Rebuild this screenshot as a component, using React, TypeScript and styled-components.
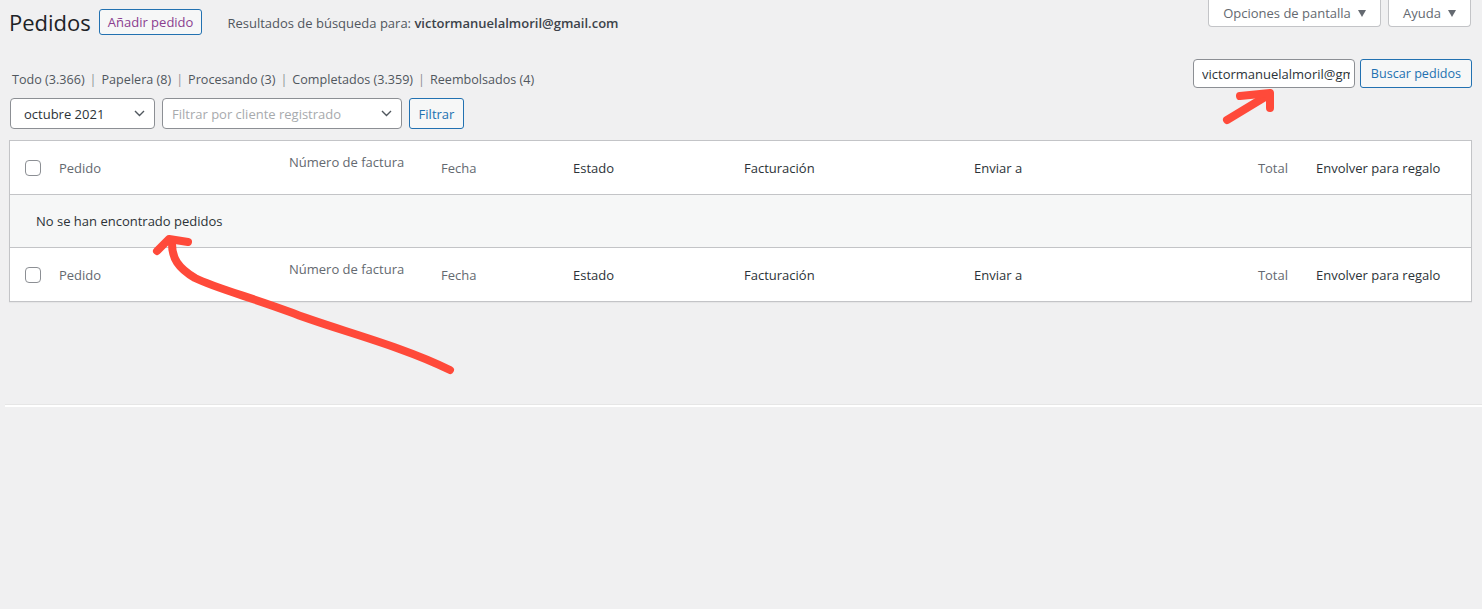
import React from "react"
import styled, { createGlobalStyle } from "styled-components"

const GlobalStyle = createGlobalStyle`
  body {
    margin: 0;
    background: #f0f0f1;
    font-family: "Open Sans", "Noto Sans", sans-serif;
    font-size: 13px;
    color: #3c434a;
  }
`

const Page = styled.div`
  position: relative;
  padding: 0 10px 0 9px;
  min-height: 609px;
  box-sizing: border-box;
`

const TopRow = styled.div`
  display: flex;
  justify-content: space-between;
  align-items: flex-start;
`

const TitleGroup = styled.div`
  display: flex;
  align-items: center;
  padding-top: 9px;
`

const Title = styled.h1`
  margin: 0 8px 0 0;
  font-size: 22px;
  font-weight: 400;
  line-height: 26px;
  color: #1d2327;
`

const OutlineButton = styled.button<{ $visited?: boolean }>`
  height: ${p => (p.$visited ? "26px" : "29px")};
  padding: 0 ${p => (p.$visited ? "8px" : "10px")};
  border: 1px solid #2271b1;
  border-radius: 3px;
  background: #f6f7f7;
  color: ${p => (p.$visited ? "#8a3d8f" : "#2271b1")};
  font-family: inherit;
  font-size: 13px;
  white-space: nowrap;
  cursor: pointer;
  box-sizing: border-box;
`

const SearchInfo = styled.span`
  margin-left: 25px;
  color: #50575e;
  font-size: 13px;
  padding-top: 2px;

  strong {
    color: #3c434a;
    font-weight: 600;
  }
`

const MetaTabs = styled.div`
  display: flex;
  gap: 7px;
  margin-right: 1px;
`

const MetaTab = styled.button<{ $width: number }>`
  display: flex;
  align-items: center;
  justify-content: center;
  gap: 7px;
  width: ${p => p.$width}px;
  height: 27px;
  padding: 0;
  border: 1px solid #c3c4c7;
  border-top: none;
  border-radius: 0 0 4px 4px;
  background: #fff;
  color: #646970;
  font-family: inherit;
  font-size: 13px;
  white-space: nowrap;
  box-sizing: border-box;
  cursor: pointer;
`

const Caret = styled.span`
  width: 0;
  height: 0;
  border-left: 4px solid transparent;
  border-right: 4px solid transparent;
  border-top: 7px solid #646970;
`

const Toolbar = styled.div`
  display: flex;
  justify-content: space-between;
  align-items: flex-start;
  margin-top: 24px;
`

const LeftTools = styled.div`
  display: flex;
  flex-direction: column;
`

const Views = styled.ul`
  display: flex;
  margin: 12px 0 0 3px;
  padding: 0;
  list-style: none;
  line-height: 18px;
  color: #50575e;
  font-size: 12.6px;
`

const ViewItem = styled.li`
  &:not(:last-child)::after {
    content: "|";
    color: #8c8f94;
    margin: 0 5px;
  }
`

const Filters = styled.div`
  display: flex;
  gap: 7px;
  margin: 9px 0 0 1px;
`

const SelectBox = styled.div<{ $width: number; $placeholder?: boolean }>`
  display: flex;
  align-items: center;
  justify-content: space-between;
  width: ${p => p.$width}px;
  height: 31px;
  padding: 0 9px 0 ${p => (p.$placeholder ? "9px" : "13px")};
  border: 1px solid #8c8f94;
  border-radius: 4px;
  background: #fff;
  color: ${p => (p.$placeholder ? "#a7aaad" : "#2c3338")};
  box-sizing: border-box;
  font-size: 13px;
`

const FilterButton = styled(OutlineButton)`
  height: 31px;
  width: 55px;
  padding: 0;
`

const SearchBox = styled.div`
  display: flex;
  gap: 5px;
`

const SearchInput = styled.input`
  width: 162px;
  height: 29px;
  margin: 0;
  padding: 0 4px 0 8px;
  border: 1px solid #8c8f94;
  border-radius: 4px;
  background: #fff;
  color: #2c3338;
  font-family: inherit;
  font-size: 13px;
  box-sizing: border-box;
  outline: none;
`

const SearchButton = styled(OutlineButton)`
  width: 112px;
  padding: 0;
  font-size: 12.6px;
`

const Table = styled.div`
  margin-top: 11px;
  border: 1px solid #c3c4c7;
  background: #fff;
  box-shadow: 0 1px 1px rgba(0, 0, 0, 0.04);
`

const Row = styled.div`
  display: grid;
  grid-template-columns: 39px 230px 152px 132px 171px 230px 230px 112px 1fr;
  height: 53px;
`

const HeadRow = styled(Row)<{ $footer?: boolean }>`
  border-bottom: ${p => (p.$footer ? "none" : "1px solid #c3c4c7")};
  border-top: ${p => (p.$footer ? "1px solid #c3c4c7" : "none")};
`

const Cell = styled.div<{ $muted?: boolean; $top?: boolean; $right?: boolean }>`
  display: flex;
  align-items: ${p => (p.$top ? "flex-start" : "center")};
  justify-content: ${p => (p.$right ? "flex-end" : "flex-start")};
  padding: ${p => (p.$top ? "12px" : "0")} ${p => (p.$right ? "18px" : "10px")} 0 10px;
  color: ${p => (p.$muted ? "#646970" : "#2c3338")};
  font-size: 13px;
  white-space: nowrap;
`

const CheckCell = styled.div`
  display: flex;
  align-items: center;
  padding-left: 15px;
`

const Checkbox = styled.span`
  width: 16px;
  height: 16px;
  border: 1px solid #8c8f94;
  border-radius: 4px;
  background: #fff;
  box-sizing: border-box;
`

const EmptyRow = styled.div`
  height: 52px;
  display: flex;
  align-items: center;
  padding-left: 26px;
  background: #f6f7f7;
  color: #2c3338;
  font-size: 13px;
`

const FooterLine = styled.div`
  margin: 102px -10px 0 -4px;
  border-top: 1px solid #e6e6e6;
  border-bottom: 2px solid #fff;
`

const Annotations = styled.svg`
  position: absolute;
  left: 0;
  top: 0;
  width: 100%;
  height: 100%;
  pointer-events: none;
`

const Chevron = () => (
  <svg width="11" height="7" viewBox="0 0 11 7" fill="none">
    <path d="M1 1l4.5 4.5L10 1" stroke="#50575e" strokeWidth="1.4" />
  </svg>
)

const columns = [
  { label: "Pedido", muted: true },
  { label: "Número de factura", muted: true, top: true },
  { label: "Fecha", muted: true },
  { label: "Estado" },
  { label: "Facturación" },
  { label: "Enviar a" },
  { label: "Total", muted: true, right: true },
  { label: "Envolver para regalo" },
]

const views = [
  "Todo (3.366)",
  "Papelera (8)",
  "Procesando (3)",
  "Completados (3.359)",
  "Reembolsados (4)",
]

const Header = ({ footer }: { footer?: boolean }) => (
  <HeadRow $footer={footer}>
    <CheckCell>
      <Checkbox />
    </CheckCell>
    {columns.map(c => (
      <Cell key={c.label} $muted={c.muted} $top={c.top} $right={c.right}>
        {c.label}
      </Cell>
    ))}
  </HeadRow>
)

export default function App() {
  return (
    <Page>
      <GlobalStyle />
      <TopRow>
        <TitleGroup>
          <Title>Pedidos</Title>
          <OutlineButton $visited>Añadir pedido</OutlineButton>
          <SearchInfo>
            Resultados de búsqueda para: <strong>victormanuelalmoril@gmail.com</strong>
          </SearchInfo>
        </TitleGroup>
        <MetaTabs>
          <MetaTab $width={173}>
            Opciones de pantalla <Caret />
          </MetaTab>
          <MetaTab $width={83}>
            Ayuda <Caret />
          </MetaTab>
        </MetaTabs>
      </TopRow>

      <Toolbar>
        <LeftTools>
          <Views>
            {views.map(v => (
              <ViewItem key={v}>{v}</ViewItem>
            ))}
          </Views>
          <Filters>
            <SelectBox $width={145}>
              octubre 2021 <Chevron />
            </SelectBox>
            <SelectBox $width={240} $placeholder>
              Filtrar por cliente registrado <Chevron />
            </SelectBox>
            <FilterButton>Filtrar</FilterButton>
          </Filters>
        </LeftTools>
        <SearchBox>
          <SearchInput type="text" readOnly value="victormanuelalmoril@gmail.com" />
          <SearchButton>Buscar pedidos</SearchButton>
        </SearchBox>
      </Toolbar>

      <Table>
        <Header />
        <EmptyRow>No se han encontrado pedidos</EmptyRow>
        <Header footer />
      </Table>

      <FooterLine />

      <Annotations>
        <g
          fill="none"
          stroke="#ff4a3a"
          strokeWidth="8"
          strokeLinecap="round"
          strokeLinejoin="round"
        >
          <path d="M450 370 C 400 345, 330 328, 290 312 C 250 297, 215 288, 195 278 C 178 268, 172 258, 172 244" />
          <path d="M157 251 L169 239 L188 242" />
          <path d="M1227 120 L1265 97" />
          <path d="M1240 96 L1270 93 L1270 108" />
        </g>
      </Annotations>
    </Page>
  )
}
